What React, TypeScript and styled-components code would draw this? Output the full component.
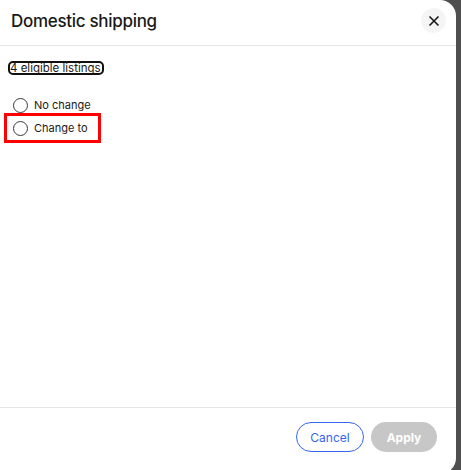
import styled, { createGlobalStyle } from "styled-components";

const GlobalStyle = createGlobalStyle`
html, body {
  margin: 0;
  padding: 0;
  background: #4f4f4f;
  font-family: Inter, "Liberation Sans", Arial, sans-serif;
  color: #191919;
}
`

const Dialog = styled.div`
width: 456px;
height: 474px;
background: #ffffff;
border-radius: 0 16px 16px 0;
display: flex;
flex-direction: column;
overflow: hidden;
`
const Header = styled.div`
height: 46px;
box-sizing: border-box;
border-bottom: 1px solid #e5e5e5;
display: flex;
align-items: center;
justify-content: space-between;
padding: 0 10px 4px 11px;
`
const Title = styled.h2`
margin: 0;
font-size: 17px;
font-weight: 500;
letter-spacing: -0.3px;
`
const CloseButton = styled.button`
width: 25px;
height: 25px;
border-radius: 50%;
border: none;
background: #f5f5f5;
display: flex;
align-items: center;
justify-content: center;
padding: 0;
`
const Body = styled.div`
flex: 1;
padding: 17px 10px;
display: flex;
flex-direction: column;
align-items: flex-start;
`
const ListingsLink = styled.a`
display: inline-block;
font-size: 11.5px;
line-height: 10px;
color: #191919;
text-decoration: none;
outline: 2px solid #111;
border-radius: 3px;
padding: 0 1px 0 0;
`
const Options = styled.div`
margin-top: 24px;
display: flex;
flex-direction: column;
align-items: flex-start;
gap: 7px;
`
const OptionRow = styled.label<{ $highlight?: boolean }>`
display: flex;
align-items: center;
gap: 6px;
font-size: 11px;
height: 16px;
margin-left: 1px;
padding: 0 6px 0 2px;
outline: ${p => (p.$highlight ? "3px solid #ff0000" : "none")};
outline-offset: 4px;
`
const Radio = styled.span`
width: 13px;
height: 13px;
border-radius: 50%;
border: 1px solid #3a3a3a;
`
const Footer = styled.div`
height: 67px;
box-sizing: border-box;
border-top: 1px solid #e5e5e5;
display: flex;
align-items: flex-start;
justify-content: flex-end;
gap: 7px;
padding: 14px 19px 0 0;
`
const Button = styled.button<{ $primary?: boolean }>`
height: 30px;
border-radius: 15px;
font-family: inherit;
font-size: 12px;
padding: 0;
width: ${p => (p.$primary ? "66px" : "68px")};
border: ${p => (p.$primary ? "none" : "1px solid #3665f3")};
background: ${p => (p.$primary ? "#c7c7c7" : "#ffffff")};
color: ${p => (p.$primary ? "#ffffff" : "#3665f3")};
font-weight: ${p => (p.$primary ? 700 : 400)};
`

const options = ["No change", "Change to"]

const App = () => {
  return (
    <>
      <GlobalStyle />
      <Dialog>
        <Header>
          <Title>Domestic shipping</Title>
          <CloseButton aria-label="Close">
            <svg width="12" height="12" viewBox="0 0 12 12">
              <path d="M1.5 1.5L10.5 10.5M10.5 1.5L1.5 10.5" stroke="#191919" strokeWidth="1.6" />
            </svg>
          </CloseButton>
        </Header>
        <Body>
          <ListingsLink href="#">4 eligible listings</ListingsLink>
          <Options>
            {options.map((o, i) => (
              <OptionRow key={o} $highlight={i === 1}>
                <Radio />
                {o}
              </OptionRow>
            ))}
          </Options>
        </Body>
        <Footer>
          <Button>Cancel</Button>
          <Button $primary>Apply</Button>
        </Footer>
      </Dialog>
    </>
  )
}

export default App
